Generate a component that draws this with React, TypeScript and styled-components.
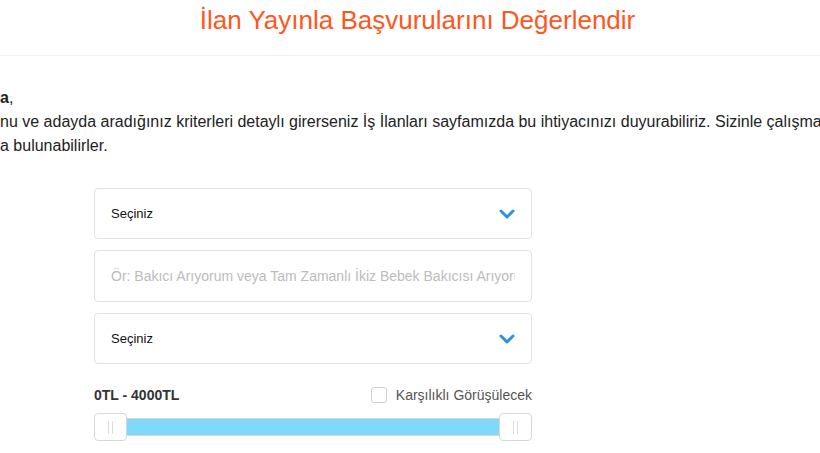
import React, { useState } from 'react';
import styled, { createGlobalStyle } from 'styled-components';

const GlobalStyle = createGlobalStyle`
  html, body {
    margin: 0;
    padding: 0;
    background: #fff;
    overflow: hidden;
  }
  body {
    font-family: "Liberation Sans", Arial, sans-serif;
    color: #222;
  }
`

const Page = styled.div`
  width: 820px;
  height: 453px;
  overflow: hidden;
`

const Header = styled.header`
  height: 55px;
  border-bottom: 1px solid #f1f1f1;
  display: flex;
  align-items: flex-start;
  justify-content: center;
  padding-left: 15px;
`

const Title = styled.h1`
  margin: 0;
  padding-top: 4px;
  font-weight: normal;
  font-size: 26px;
  line-height: 32px;
  color: #ff561b;
  white-space: nowrap;
`

const Intro = styled.div`
  padding-top: 30px;
  font-size: 16px;
  line-height: 24px;
  color: #222;
`

const IntroLine = styled.div`
  white-space: nowrap;
  b {
    font-weight: bold;
  }
`

const Form = styled.form`
  width: 438px;
  margin: 30px 0 0 94px;
  display: flex;
  flex-direction: column;
  gap: 11px;
`

const Field = styled.div`
  height: 51px;
  box-sizing: border-box;
  border: 1px solid #e3e3e3;
  border-radius: 4px;
  display: flex;
  align-items: center;
  justify-content: space-between;
  padding: 0 16px;
  background: #fff;
`

const SelectText = styled.span`
  font-size: 13px;
  color: #111;
`

const TextInput = styled.input`
  height: 52px;
  box-sizing: border-box;
  border: 1px solid #dde3e6;
  border-radius: 4px;
  padding: 0 16px;
  font-family: "Liberation Sans", Arial, sans-serif;
  font-size: 14px;
  color: #333;
  outline: none;
  &::placeholder {
    color: #bcbcbc;
  }
`

const RangeHeader = styled.div`
  display: flex;
  justify-content: space-between;
  align-items: center;
  margin-top: 12px;
`

const RangeValue = styled.span`
  font-size: 14px;
  font-weight: bold;
  color: #333;
`

const CheckLabel = styled.label`
  display: flex;
  align-items: center;
  gap: 9px;
  font-size: 14px;
  color: #555;
`

const Box = styled.span<{ $checked: boolean }>`
  width: 14px;
  height: 14px;
  border: 1px solid #d0d0d0;
  border-radius: 3px;
  background: ${p => (p.$checked ? '#2a93de' : '#fff')};
`

const Slider = styled.div`
  display: flex;
  align-items: center;
  height: 28px;
  margin-top: -1px;
`

const Handle = styled.div`
  width: 31px;
  height: 26px;
  border: 1px solid #d8d8d8;
  border-radius: 4px;
  background: #fff;
  display: flex;
  justify-content: center;
  align-items: center;
  gap: 3px;
  flex-shrink: 0;
  span {
    width: 1px;
    height: 13px;
    background: #dcdcdc;
  }
`

const Track = styled.div`
  flex: 1;
  height: 16px;
  background: #7fd9fb;
  border-top: 1px solid #d6d6d6;
  border-bottom: 1px solid #d6d6d6;
`

function Chevron() {
  return (
    <svg width="16" height="10" viewBox="0 0 16 10">
      <polyline points="2,2 8,8 14,2" fill="none" stroke="#2a93de" strokeWidth="3" strokeLinecap="round" strokeLinejoin="round" />
    </svg>
  )
}

export default function App() {
  const [checked, setChecked] = useState(false)
  return (
    <Page>
      <GlobalStyle />
      <Header>
        <Title>İlan Yayınla Başvurularını Değerlendir</Title>
      </Header>
      <Intro>
        <IntroLine><b>a</b>,</IntroLine>
        <IntroLine>nu ve adayda aradığınız kriterleri detaylı girerseniz İş İlanları sayfamızda bu ihtiyacınızı duyurabiliriz. Sizinle çalışmak</IntroLine>
        <IntroLine>a bulunabilirler.</IntroLine>
      </Intro>
      <Form onSubmit={(e) => e.preventDefault()}>
        <Field>
          <SelectText>Seçiniz</SelectText>
          <Chevron />
        </Field>
        <TextInput placeholder="Ör: Bakıcı Arıyorum veya Tam Zamanlı İkiz Bebek Bakıcısı Arıyorum" />
        <Field>
          <SelectText>Seçiniz</SelectText>
          <Chevron />
        </Field>
        <RangeHeader>
          <RangeValue>0TL - 4000TL</RangeValue>
          <CheckLabel onClick={() => setChecked(!checked)}>
            <Box $checked={checked} />
            Karşılıklı Görüşülecek
          </CheckLabel>
        </RangeHeader>
        <Slider>
          <Handle><span /><span /></Handle>
          <Track />
          <Handle><span /><span /></Handle>
        </Slider>
      </Form>
    </Page>
  )
}
